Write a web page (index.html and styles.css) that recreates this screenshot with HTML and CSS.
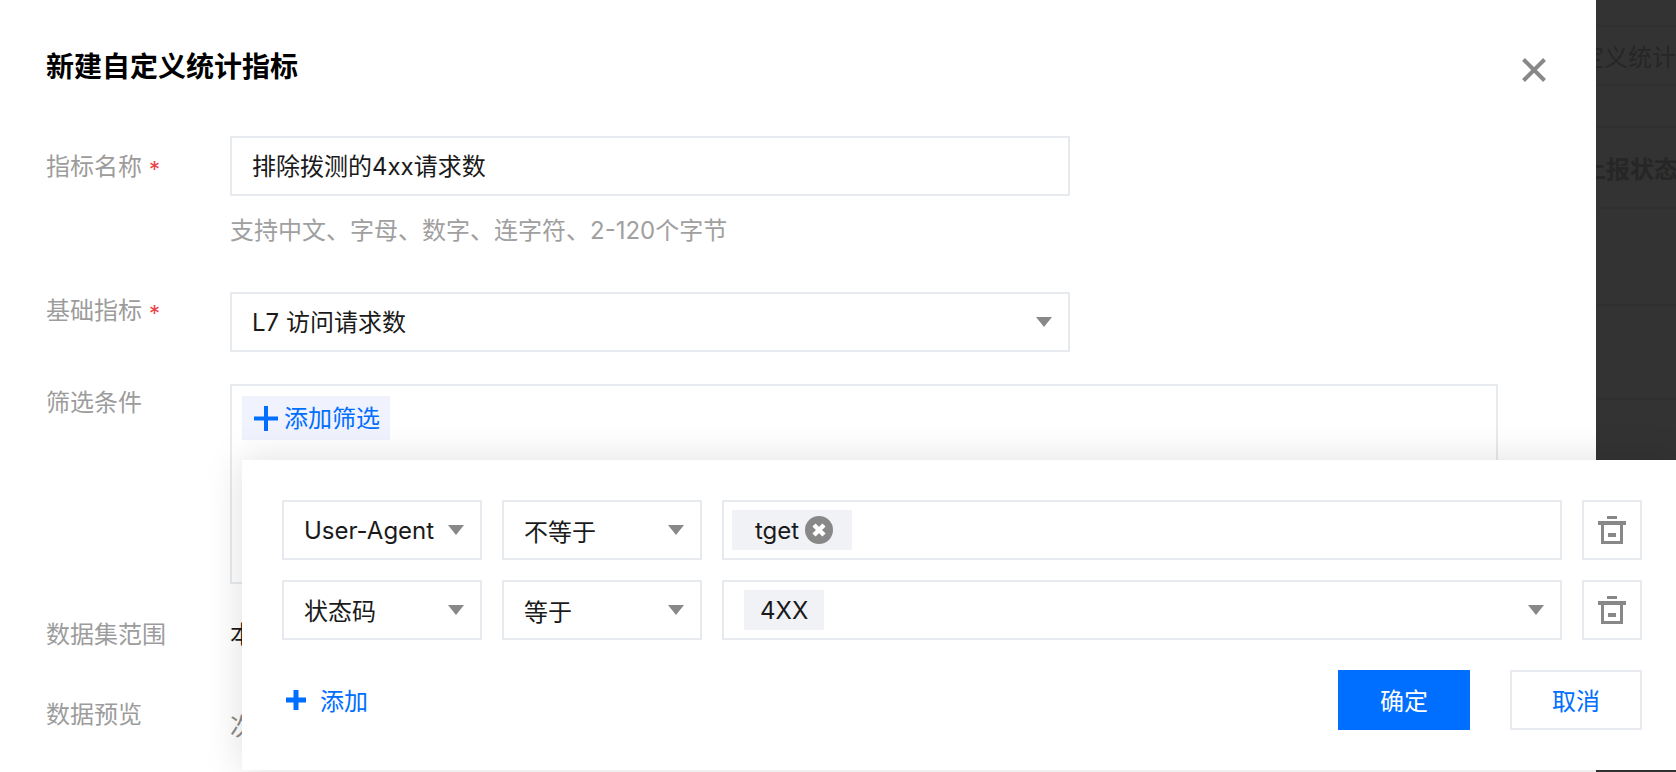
FILE: index.html
```html
<!DOCTYPE html>
<html lang="zh-CN">
<head>
<meta charset="utf-8">
<title>新建自定义统计指标</title>
<link rel="stylesheet" href="styles.css">
</head>
<body>
<div class="page">
  <div class="bg-row bg-h1"></div>
  <div class="bg-row bg-h2"><span class="bg-text">自定义统计指标</span></div>
  <div class="bg-row bg-h3"></div>
  <div class="bg-row bg-h4"><span class="bg-text bg-bold">上报状态</span></div>
  <div class="bg-row bg-h5"></div>
  <div class="bg-row bg-h6"></div>
  <div class="bg-row bg-h7"></div>
</div>

<section class="modal">
  <header class="modal-head">
    <h1 class="modal-title">新建自定义统计指标</h1>
    <svg class="modal-close" width="24" height="24" viewBox="0 0 24 24"><path d="M1.5 1.5 22.500 22.500M22.500 1.500 1.500 22.500" stroke="#888" stroke-width="4" fill="none"/></svg>
  </header>

  <div class="form-row row-name">
    <div class="label label-center">指标名称<span class="star">*</span></div>
    <div class="control">
      <div class="field">排除拨测的4xx请求数</div>
      <div class="hint">支持中文、字母、数字、连字符、2-120个字节</div>
    </div>
  </div>

  <div class="form-row row-base">
    <div class="label">基础指标<span class="star">*</span></div>
    <div class="control">
      <div class="field field-select">L7 访问请求数<i class="arrow"></i></div>
    </div>
  </div>

  <div class="form-row row-filter">
    <div class="label">筛选条件</div>
    <div class="filter-box">
      <div class="add-filter">
        <svg width="24" height="25" viewBox="0 0 24 25"><path d="M12 0V25M0 12.500H24" stroke="#006eff" stroke-width="4" fill="none"/></svg>
        <span>添加筛选</span>
      </div>
    </div>
  </div>

  <div class="form-row row-scope">
    <div class="label label-wide">数据集范围</div>
    <div class="value">本</div>
  </div>

  <div class="form-row row-preview">
    <div class="label">数据预览</div>
    <div class="value value-muted">次</div>
  </div>
</section>

<section class="popover">
  <div class="cond-row">
    <div class="box cond-select">User-Agent<i class="arrow"></i></div>
    <div class="box cond-select">不等于<i class="arrow"></i></div>
    <div class="box cond-value">
      <span class="tag tag-close">tget
        <svg width="28" height="28" viewBox="0 0 28 28"><circle cx="14" cy="14" r="14" fill="#888"/><path d="M9 9 19 19M19 9 9 19" stroke="#fff" stroke-width="4.500" fill="none"/></svg>
      </span>
    </div>
    <div class="box cond-del">
      <svg width="28" height="28" viewBox="0 0 28 28"><path fill="#888" d="M9 0H19V3H9ZM0 5H28V9H0ZM3 9H6V25H22V9H25V28H3ZM10 17H18V21H10Z"/></svg>
    </div>
  </div>
  <div class="cond-row">
    <div class="box cond-select cond-cjk">状态码<i class="arrow"></i></div>
    <div class="box cond-select">等于<i class="arrow"></i></div>
    <div class="box cond-value">
      <span class="tag tag-plain">4XX</span>
      <i class="arrow"></i>
    </div>
    <div class="box cond-del">
      <svg width="28" height="28" viewBox="0 0 28 28"><path fill="#888" d="M9 0H19V3H9ZM0 5H28V9H0ZM3 9H6V25H22V9H25V28H3ZM10 17H18V21H10Z"/></svg>
    </div>
  </div>
  <div class="pop-foot">
    <div class="add-link">
      <svg width="20" height="20" viewBox="0 0 20 20"><path d="M10 0V20M0 10H20" stroke="#006eff" stroke-width="5" fill="none"/></svg>
      <span>添加</span>
    </div>
    <div class="pop-actions">
      <div class="btn btn-primary">确定</div>
      <div class="btn btn-plain">取消</div>
    </div>
  </div>
</section>
</body>
</html>
```
FILE: styles.css
```css
* { box-sizing: border-box; }

html, body {
  margin: 0;
  height: 100%;
  overflow: hidden;
}

body {
  position: relative;
  background: #333;
  font-family: Inter, "Noto Sans CJK SC", sans-serif;
  font-size: 24px;
  color: #1a1a1a;
}

/* dimmed page behind the dialog */
.page { display: flex; flex-direction: column; }
.bg-row {
  display: flex;
  align-items: center;
  padding-left: 1556px;
  border-bottom: 2px solid #303030;
  white-space: nowrap;
  color: #262626;
}
.bg-h1 { height: 27px; }
.bg-h2 { height: 59px; }
.bg-h3 { height: 42px; }
.bg-h4 { height: 81px; padding-left: 1582px; }
.bg-h5 { height: 97px; }
.bg-h6 { height: 94px; }
.bg-h7 { height: 60px; border-bottom: 0; }
.bg-bold { font-weight: 700; }

/* dialog */
.modal {
  position: absolute;
  left: 0;
  top: 0;
  width: 1596px;
  height: 772px;
  background: #fff;
  padding: 49px 50px 0 46px;
  overflow: hidden;
}
.modal-head {
  display: flex;
  justify-content: space-between;
  align-items: flex-start;
}
.modal-title {
  margin: 0;
  font-size: 28px;
  line-height: 36px;
  font-weight: 700;
  color: #000;
}
.modal-close { margin-top: 9px; }

.form-row { display: flex; align-items: flex-start; }
.row-name { margin-top: 51px; }
.row-base { margin-top: 43px; }
.row-filter { margin-top: 32px; }
.row-scope { margin-top: 32px; }
.row-preview { margin-top: 42px; }

.label {
  flex: none;
  width: 184px;
  line-height: 38px;
  color: #9c9c9c;
  white-space: nowrap;
}
.label-center { padding-top: 12px; }
.star {
  color: #e54545;
  margin-left: 7px;
  font-size: 22px;
  line-height: 1;
  vertical-align: -2px;
}
.control { width: 840px; }

.field {
  position: relative;
  height: 60px;
  border: 2px solid #e7eaef;
  padding-left: 20px;
  line-height: 58px;
}
.hint {
  margin-top: 17px;
  line-height: 36px;
  color: #a0a0a0;
}

.filter-box {
  width: 1268px;
  height: 200px;
  border: 2px solid #e7eaef;
  padding: 10px;
}
.add-filter {
  display: inline-flex;
  align-items: center;
  gap: 6px;
  width: 148px;
  height: 44px;
  padding-left: 12px;
  background: #f0f2fd;
  color: #006eff;
}
.add-filter span { margin-bottom: 4px; }
.value { line-height: 38px; color: #1a1a1a; }
.value-muted { color: #888; margin-top: 12px; }

/* select arrow */
.arrow {
  position: absolute;
  right: 16px;
  top: 50%;
  margin-top: -5px;
  width: 0;
  height: 0;
  border-left: 8px solid transparent;
  border-right: 8px solid transparent;
  border-top: 10px solid #888;
}

/* filter popover */
.popover {
  position: absolute;
  left: 242px;
  top: 460px;
  right: 0;
  height: 310px;
  padding: 40px 34px 40px 40px;
  background: #fff;
  box-shadow: 0 0 36px rgba(0, 0, 0, 0.13);
}
.cond-row { display: flex; gap: 20px; margin-bottom: 20px; }
.box {
  position: relative;
  height: 60px;
  border: 2px solid #e7eaef;
  display: flex;
  align-items: center;
  white-space: nowrap;
}
.cond-select { width: 200px; padding-left: 20px; }
.cond-cjk { padding-bottom: 2px; }
.cond-value { width: 840px; padding-left: 8px; }
.cond-del { width: 60px; justify-content: center; }

.tag {
  display: inline-flex;
  align-items: center;
  height: 40px;
  background: #f1f2f6;
}
.tag-close { width: 120px; padding-left: 23px; gap: 6px; }
.tag-plain { width: 80px; margin-left: 12px; padding-left: 16px; }

.pop-foot {
  display: flex;
  justify-content: space-between;
  align-items: center;
  margin-top: 30px;
}
.add-link {
  display: flex;
  align-items: center;
  gap: 14px;
  padding-left: 4px;
  color: #006eff;
}
.add-link span { margin-bottom: 2px; }
.pop-actions { display: flex; gap: 40px; }
.btn {
  width: 132px;
  height: 60px;
  display: flex;
  align-items: center;
  justify-content: center;
  padding-bottom: 2px;
}
.btn-primary { background: #006eff; color: #fff; }
.btn-plain { border: 2px solid #e7eaef; color: #006eff; }
```
